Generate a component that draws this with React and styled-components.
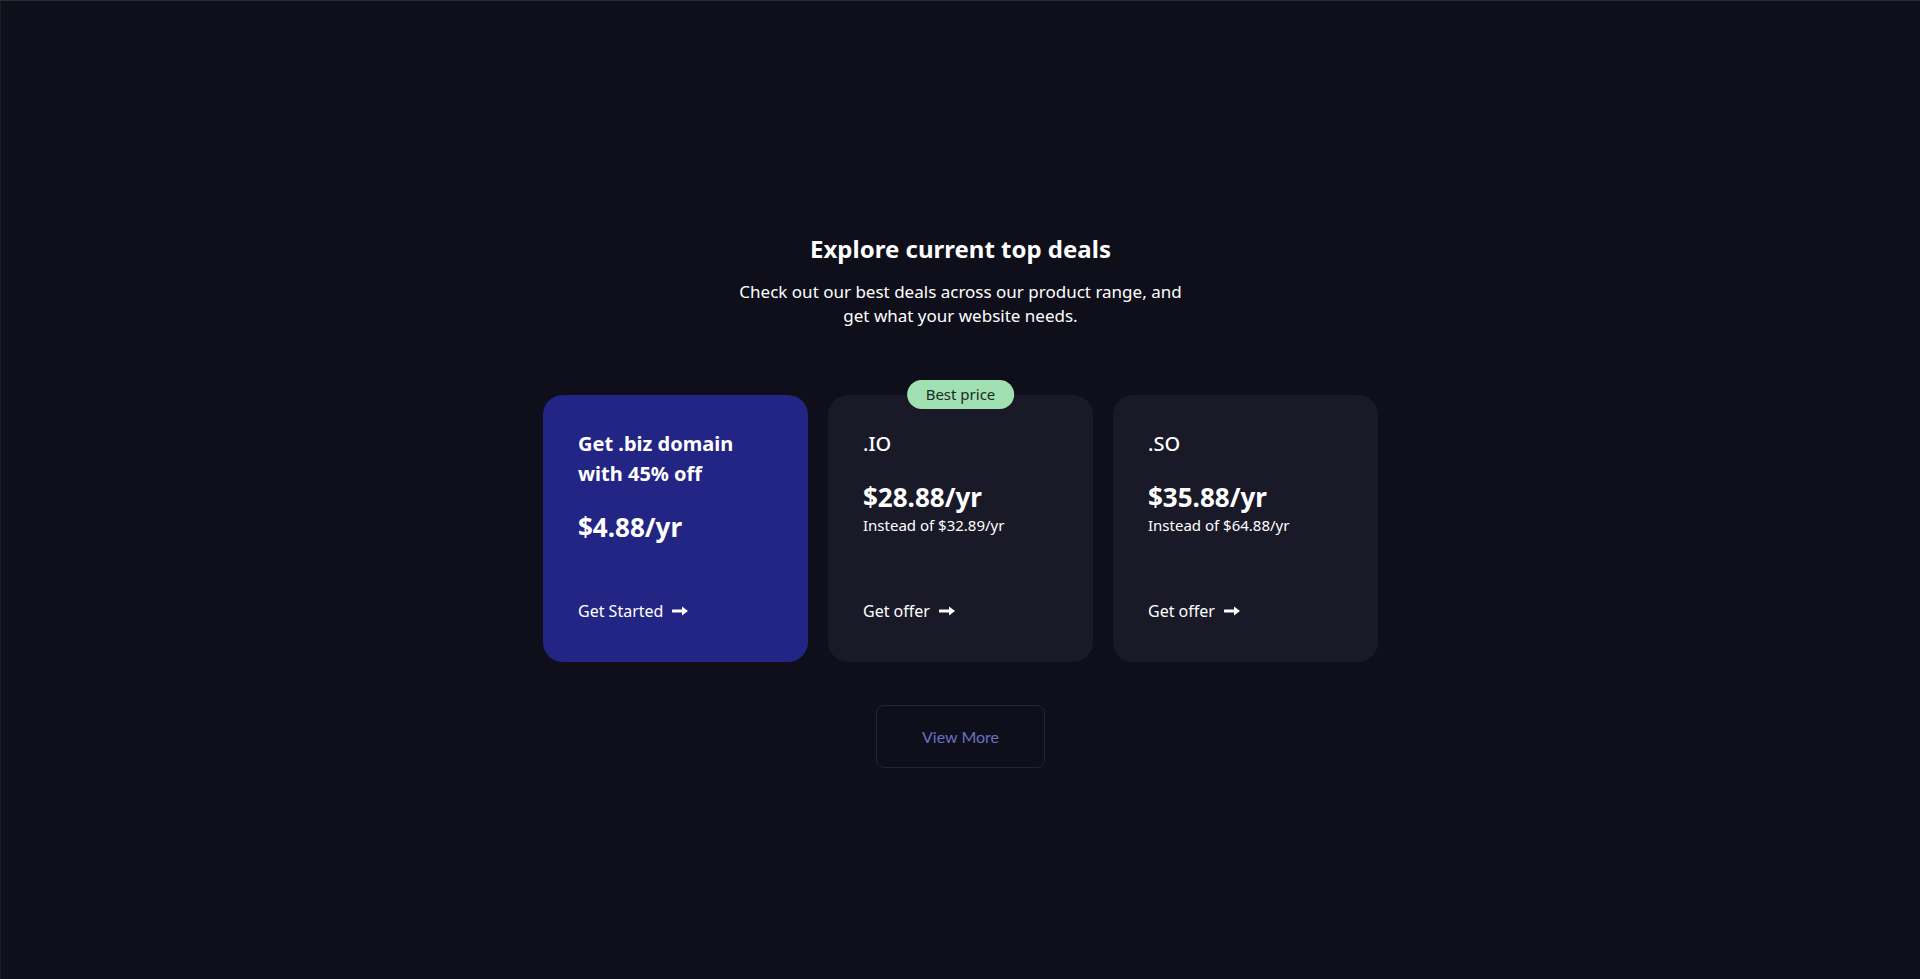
import React from 'react';
import styled, { createGlobalStyle } from 'styled-components';

const GlobalStyle = createGlobalStyle`
  html, body {
    margin: 0;
    padding: 0;
    background: #0e0f1a;
  }
  body {
    font-family: "Noto Sans", Lato, sans-serif;
    color: #ffffff;
  }
  * {
    box-sizing: border-box;
  }
`;

const Page = styled.main`
  min-height: 100vh;
  background: #0e0f1a;
  border-top: 1px solid #2a2a30;
  border-left: 1px solid #1e1e22;
  display: flex;
  flex-direction: column;
  align-items: center;
  padding-top: 233px;
`;

const Heading = styled.h2`
  margin: 0;
  font-size: 24px;
  line-height: 30px;
  font-weight: 700;
  text-align: center;
`;

const Lead = styled.p`
  margin: 16px 0 0;
  max-width: 460px;
  font-size: 17px;
  line-height: 24px;
  text-align: center;
`;

const CardRow = styled.div`
  display: grid;
  grid-template-columns: repeat(3, 265px);
  gap: 20px;
  margin-top: 67px;
`;

const Card = styled.div`
  position: relative;
  height: 267px;
  border-radius: 20px;
  background: ${props => (props.$featured ? '#232585' : '#191928')};
  padding: 34px 35px 41px;
  display: flex;
  flex-direction: column;
`;

const Badge = styled.span`
  position: absolute;
  top: -15px;
  left: 50%;
  transform: translateX(-50%);
  height: 29px;
  padding: 0 19px;
  border-radius: 15px;
  background: #a0e0b3;
  color: #1d2a22;
  font-size: 15px;
  line-height: 29px;
  white-space: nowrap;
`;

const Title = styled.h3`
  margin: 0;
  font-size: 20px;
  line-height: 30px;
  font-weight: ${props => (props.$bold ? 700 : 500)};
`;

const Price = styled.div`
  margin-top: 22px;
  font-size: 26px;
  line-height: 32px;
  font-weight: 700;
`;

const OldPrice = styled.div`
  margin-top: 2px;
  font-size: 15px;
  line-height: 20px;
`;

const Cta = styled.a`
  margin-top: auto;
  display: inline-flex;
  align-items: center;
  gap: 9px;
  color: #ffffff;
  text-decoration: none;
  font-size: 16px;
  line-height: 20px;
  cursor: pointer;
`;

const MoreButton = styled.button`
  margin-top: 43px;
  width: 169px;
  height: 63px;
  border: 1px solid #23233a;
  border-radius: 8px;
  background: transparent;
  color: #6a6fc4;
  font-family: Lato, "Noto Sans", sans-serif;
  font-size: 16px;
  cursor: pointer;
`;

const Arrow = () => (
  <svg width="16" height="10" viewBox="0 0 16 10" fill="#ffffff">
    <rect x="0" y="3.6" width="11" height="2.8" rx="0.6" />
    <path d="M10 0.5 L16 5 L10 9.5 Z" />
  </svg>
);

const deals = [
  { id: 'biz', featured: true, title: ['Get .biz domain', 'with 45% off'], price: '$4.88/yr', cta: 'Get Started' },
  { id: 'io', badge: 'Best price', title: ['.IO'], price: '$28.88/yr', old: 'Instead of $32.89/yr', cta: 'Get offer' },
  { id: 'so', title: ['.SO'], price: '$35.88/yr', old: 'Instead of $64.88/yr', cta: 'Get offer' },
];

const App = () => {
  return (
    <Page>
      <GlobalStyle />
      <Heading>Explore current top deals</Heading>
      <Lead>Check out our best deals across our product range, and get what your website needs.</Lead>

      <CardRow>
        {deals.map(deal => (
          <Card key={deal.id} $featured={deal.featured}>
            {deal.badge && <Badge>{deal.badge}</Badge>}
            <Title $bold={deal.featured}>
              {deal.title.map((line, i) => (
                <React.Fragment key={i}>
                  {i > 0 && <br />}
                  {line}
                </React.Fragment>
              ))}
            </Title>
            <Price>{deal.price}</Price>
            {deal.old && <OldPrice>{deal.old}</OldPrice>}
            <Cta>
              {deal.cta}
              <Arrow />
            </Cta>
          </Card>
        ))}
      </CardRow>

      <MoreButton>View More</MoreButton>
    </Page>
  );
};

export default App;
